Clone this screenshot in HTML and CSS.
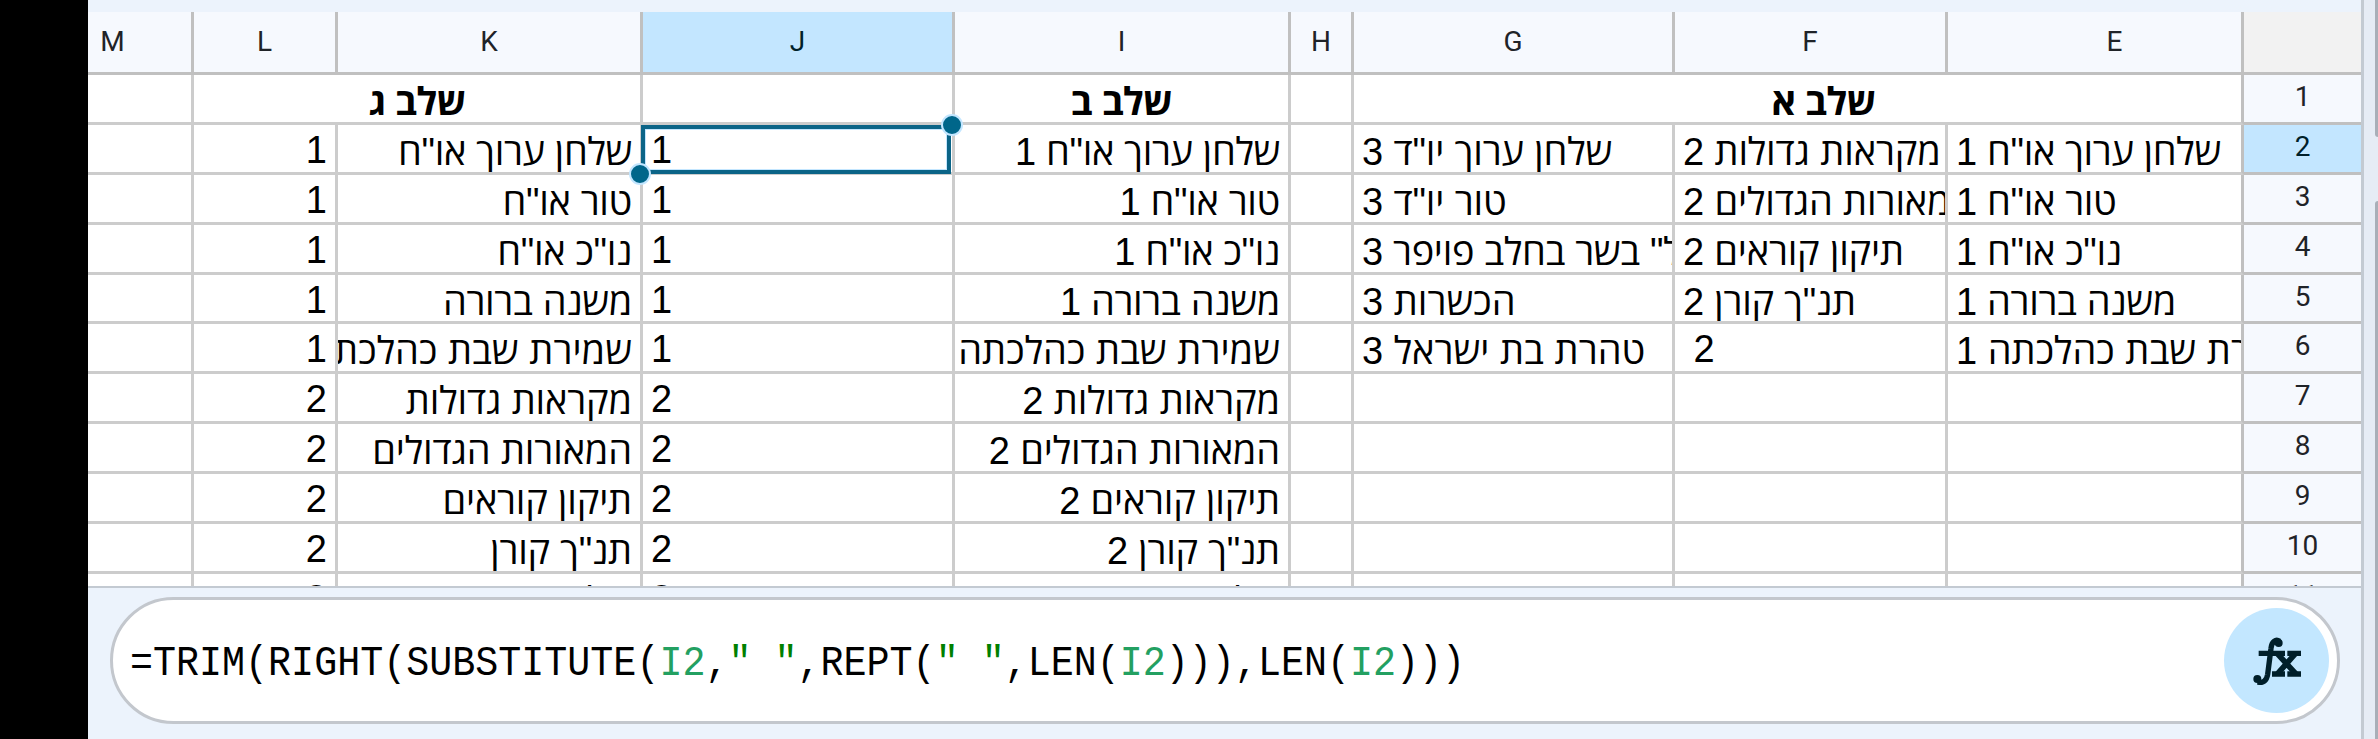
FILE: index.html
```
<!DOCTYPE html>
<html lang="he">
<head>
<meta charset="utf-8">
<title>Sheet</title>
<link rel="stylesheet" href="styles.css">
</head>
<body>
<div class="screen">
  <div class="notch"></div>
  <main class="app">
    <div class="sheet" id="sheet"></div>
    <div class="formula-bar">
      <div class="formula-field">
        <div class="formula-text">=TRIM(RIGHT(SUBSTITUTE(<span class="ref">I2</span>,<span class="str">" "</span>,REPT(<span class="str">" "</span>,LEN(<span class="ref">I2</span>))),LEN(<span class="ref">I2</span>)))</div>
        <div class="fx-button">
          <svg class="fx-icon" viewBox="0 0 144 144">
            <path d="M17 49H96M103 49H144M57 111H96M103 111H144" fill="none" stroke="#001f2a" stroke-width="16"/>
            <path d="M73 50L128 110M127 50L74 110" fill="none" stroke="#001f2a" stroke-width="17"/>
            <path d="M80 13C68 5 56 14 54 34L44 112C41 131 30 140 14 135" fill="none" stroke="#001f2a" stroke-width="16"/>
            <circle cx="77" cy="18" r="12" fill="#001f2a"/>
            <circle cx="13" cy="126" r="12" fill="#001f2a"/>
          </svg>
        </div>
      </div>
    </div>
  </main>
  <aside class="side"><div class="thumb thumb-top"></div><div class="thumb thumb-bottom"></div></aside>
</div>
<script src="sheet.js"></script>
</body>
</html>
```
FILE: styles.css
```
body { margin: 0; background: #ecf3fc; }
.screen { display: flex; width: 2378px; height: 739px; overflow: hidden; background: #ecf3fc; }
.notch { width: 88px; background: #000; flex: none; }
.app { width: 2273px; flex: none; border-right: 3px solid #c3cad2; padding-top: 12px; box-sizing: content-box; height: 727px; }
.sheet {
  display: grid;
  width: 2273px; height: 574px; overflow: hidden;
  grid-template-columns: 106px 144px 305px 312px 336px 63px 321px 273px 296px 117px;
  grid-template-rows: 63px 50px 50px 50px 50px 49px 50px 50px 50px 50px 50px 12px;
  border-bottom: 2px solid #c3cad2;
  background: #fff;
}
.cell {
  position: relative; display: flex; box-sizing: border-box; min-width: 0; min-height: 0; overflow: hidden;
  border-right: 3px solid #ccc; border-bottom: 3px solid #ccc;
  padding: 0 8px; white-space: pre; color: #000;
  font: 38px/48px "Liberation Sans", sans-serif;
}
.cell.last { border-bottom: 0; }
.cell.end { justify-content: flex-end; }
.cell.mid { justify-content: center; font-weight: bold; letter-spacing: -.7px; }
.text { flex: none; height: 47px; padding-top: 1px; }
.he { font-family: "Open Sans", sans-serif; }
.head, .num {
  display: flex; box-sizing: border-box; justify-content: center; overflow: hidden; min-height: 0;
  background: #f6f9fe; color: #1f2328; font: 28px/30px Roboto, sans-serif;
}
.head { border-right: 3px solid #c0c0c0; border-bottom: 3px solid #c0c0c0; padding-top: 15px; }
.num { border-bottom: 3px solid #c0c0c0; padding-top: 7px; }
.num.last { border-bottom: 0; }
.head.active, .num.active { background: #c3e6ff; color: #001f2a; }
.head.corner { background: #f2f2f2; border-right: 0; }
.head.col-m { padding-right: 54px; }
.head.col-e { padding-left: 40px; }
.cell.edge { border-right-color: #c0c0c0; }
.span2 { grid-column: span 2; }
.cell.span3 { grid-column: span 3; padding-left: 60px; }
.cell.selected { overflow: visible; }
.selection {
  position: absolute; left: -2px; top: 0; width: 310px; height: 49px; box-sizing: border-box;
  border: 4px solid #0b6487; box-shadow: inset 0 0 0 1px #c3e6ff; z-index: 2;
}
.handle {
  position: absolute; width: 18px; height: 18px; border-radius: 50%;
  background: #00668a; border: 2px solid #c3e6ff; z-index: 3;
}
.handle-top { right: -11px; top: -11px; }
.handle-bottom { left: -14px; bottom: -13px; }
.formula-bar { height: 150px; padding: 9px 21px 0 22px; }
.formula-field {
  display: flex; align-items: center; justify-content: space-between; box-sizing: border-box; height: 127px;
  background: #fff; border: 3px solid #c3c7cd; border-radius: 64px; padding: 0 8px 0 17px;
}
.formula-text {
  white-space: pre; font: 43px/50px "Liberation Mono", monospace; color: #000;
  transform: scaleX(.892); transform-origin: left center; padding-top: 6px;
}
.ref { color: #23a061; }
.str { color: #008000; }
.fx-button { display: flex; flex: none; width: 105px; height: 105px; border-radius: 50%; background: #c3e7ff; align-items: center; justify-content: center; }
.fx-icon { width: 48px; height: 48px; display: block; }
.side { display: flex; flex-direction: column; justify-content: space-between; align-items: flex-end; width: 14px; background: #e6ecf5; }
.thumb { width: 3px; background: #a9afb8; }
.thumb-top { height: 137px; border-bottom-left-radius: 3px; }
.thumb-bottom { height: 538px; border-top-left-radius: 3px; }
```
FILE: sheet.js
```
const columns = ['M', 'L', 'K', 'J', 'I', 'H', 'G', 'F', 'E'];
const names = ['שלחן ערוך או"ח', 'טור או"ח', 'נו"כ או"ח', 'משנה ברורה', 'שמירת שבת כהלכתה',
  'מקראות גדולות', 'המאורות הגדולים', 'תיקון קוראים', 'תנ"ך קורן', 'שלחן ערוך יו"ד'];
const data = {
  G: ['שלחן ערוך יו"ד 3', 'טור יו"ד 3', 'הל" בשר בחלב פויפר 3', 'הכשרות 3', 'טהרת בת ישראל 3'],
  F: ['מקראות גדולות 2', 'המאורות הגדולים 2', 'תיקון קוראים 2', 'תנ"ך קורן 2', '2\u00a0'],
  E: ['שלחן ערוך או"ח 1', 'טור או"ח 1', 'נו"כ או"ח 1', 'משנה ברורה 1', 'שמירת שבת כהלכתה 1'],
};
// Letter tracking per title, in px
const tracking = [
  ['או"ח', -0.35], ['יו"ד', -0.15], ['משנה', -0.35], ['הל"', -0.35],
  ['מקראות', -0.15], ['המאורות', -0.15], ['תיקון', -0.2], ['תנ"ך', -0.25],
];
const sheet = document.getElementById('sheet');

function add(className, text) {
  const el = document.createElement('div');
  el.className = className;
  if (text) {
    const inner = document.createElement('span');
    inner.className = 'text';
    inner.dir = /[\u0590-\u05ff\u00a0]/.test(text) ? 'rtl' : 'ltr';
    const track = tracking.find(([key]) => text.includes(key));
    if (track) inner.style.letterSpacing = track[1] + 'px';
    for (const part of text.match(/[\u0590-\u05ff]+|[^\u0590-\u05ff]+/g)) {
      const run = document.createElement('span');
      if (/[\u0590-\u05ff]/.test(part)) run.className = 'he';
      run.textContent = part;
      inner.append(run);
    }
    el.append(inner);
  }
  sheet.append(el);
  return el;
}

function label(className, text) {
  const el = document.createElement('div');
  el.className = className;
  el.textContent = text;
  sheet.append(el);
}

columns.forEach(c => label('head col-' + c.toLowerCase() + (c === 'J' ? ' active' : ''), c));
label('head corner', '');

add('cell');
add('cell mid span2', 'שלב ג');
add('cell');
add('cell mid', 'שלב ב');
add('cell');
add('cell mid span3 edge', 'שלב א');
label('num', '1');

for (let row = 2; row <= 11; row++) {
  const i = row - 2;
  const step = String(i < 5 ? 1 : i < 9 ? 2 : 3);
  const last = row === 11 ? ' last' : '';
  for (const c of columns) {
    if (c === 'L') add('cell end' + last, step);
    else if (c === 'K') add('cell end' + last, names[i]);
    else if (c === 'I') add('cell end' + last, i === 4 ? names[i] : names[i] + ' ' + step);
    else if (c === 'J') {
      const cell = add('cell' + last + (row === 2 ? ' selected' : ''), step);
      if (row === 2) {
        cell.insertAdjacentHTML('beforeend',
          '<div class="selection"></div><div class="handle handle-top"></div><div class="handle handle-bottom"></div>');
      }
    } else add('cell' + last + (c === 'E' ? ' edge' : ''), data[c] && data[c][i]);
  }
  label('num' + last + (row === 2 ? ' active' : ''), String(row));
}
```
